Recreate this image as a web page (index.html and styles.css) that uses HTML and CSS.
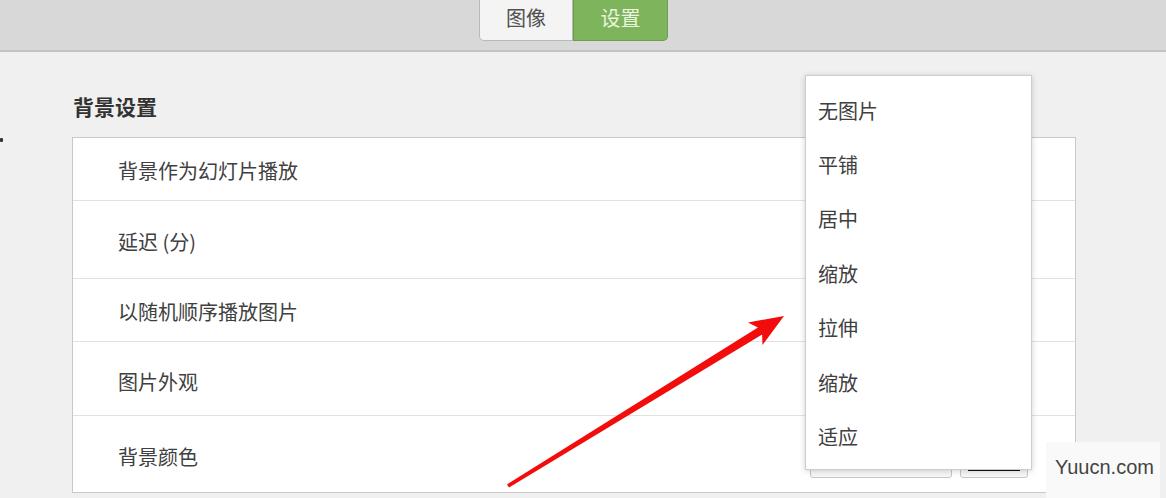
FILE: index.html
```html
<!DOCTYPE html>
<html lang="zh">
<head>
<meta charset="utf-8">
<link rel="stylesheet" href="styles.css">
</head>
<body>
<header class="topbar">
  <div class="tabs">
    <span class="tab">图像</span>
    <span class="tab active">设置</span>
  </div>
</header>
<main class="content">
  <h2 class="section-title">背景设置</h2>
  <div class="panel">
    <div class="row r1"><span>背景作为幻灯片播放</span></div>
    <div class="row r2"><span>延迟 (分)</span></div>
    <div class="row r3"><span>以随机顺序播放图片</span></div>
    <div class="row r4"><span>图片外观</span></div>
    <div class="row r5"><span>背景颜色</span>
      <div class="controls">
        <div class="select-box"></div>
        <div class="color-btn"><i></i></div>
      </div>
    </div>
  </div>
</main>
<div class="cursor-dot"></div>
<ul class="dropdown">
  <li>无图片</li>
  <li>平铺</li>
  <li>居中</li>
  <li>缩放</li>
  <li>拉伸</li>
  <li>缩放</li>
  <li>适应</li>
</ul>
<svg class="arrow" width="1166" height="498" viewBox="0 0 1166 498">
  <polygon fill="#f20c0c" points="507,484.5 757.9,327.6 748,322.5 784,316 762.5,345 762.1,334.4 509,487.5"/>
</svg>
<div class="watermark">Yuucn.com</div>
</body>
</html>
```
FILE: styles.css
```css
* { box-sizing: border-box; }
html, body { margin: 0; padding: 0; }
body {
  width: 1166px;
  height: 498px;
  overflow: hidden;
  background: #f0f0f0;
  font-family: "Noto Sans CJK SC", "Liberation Sans", sans-serif;
  color: #444;
  position: relative;
}
.topbar {
  height: 52px;
  background: #d8d8d8;
  border-bottom: 2px solid #c3c3c3;
  padding-left: 479px;
}
.tabs { display: flex; }
.tab {
  width: 94px;
  height: 41px;
  display: flex;
  align-items: center;
  justify-content: center;
  padding-bottom: 6px;
  font-size: 20px;
  color: #505050;
  background: #f4f4f4;
  border: 1px solid #b8b8b8;
  border-top: none;
  border-radius: 0 0 0 5px;
}
.tab.active {
  width: 95px;
  background: #7db45c;
  border-color: #6c9f4d;
  color: #eaf6de;
  border-radius: 0 0 5px 0;
}
.content { padding-left: 72px; }
.section-title {
  margin: 0;
  padding-top: 41px;
  height: 85px;
  font-size: 21px;
  font-weight: bold;
  color: #333;
  line-height: 26px;
  padding-left: 1px;
}
.panel {
  width: 1004px;
  background: #fff;
  border: 1px solid #c8c8c8;
}
.row {
  display: flex;
  align-items: center;
  justify-content: space-between;
  padding-left: 45px;
  font-size: 20px;
  color: #404040;
  border-bottom: 1px solid #e2e2e2;
}
.row:last-child { border-bottom: none; }
.r1 { height: 63px; padding-top: 3px; }
.r2 { height: 78px; padding-top: 4px; }
.r3 { height: 63px; padding-top: 3px; }
.r4 { height: 74px; padding-top: 5px; }
.r5 { height: 76px; padding-top: 4px; }
.controls {
  display: flex;
  gap: 8px;
  margin-right: 47px;
  margin-top: 4px;
}
.select-box {
  width: 142px;
  height: 40px;
  border: 1px solid #c6c6c6;
  border-radius: 3px;
  background: #f7f7f7;
}
.color-btn {
  width: 68px;
  height: 40px;
  border: 1px solid #c6c6c6;
  border-radius: 3px;
  background: #f7f7f7;
  display: flex;
  align-items: flex-end;
  justify-content: center;
  padding-bottom: 6px;
}
.color-btn i {
  display: block;
  width: 52px;
  height: 2px;
  background: #111;
}
.dropdown {
  position: absolute;
  left: 805px;
  top: 75px;
  width: 227px;
  height: 395px;
  margin: 0;
  padding: 7px 0 0 0;
  list-style: none;
  background: #fff;
  border: 1px solid #cdcdcd;
  box-shadow: 0 1px 6px rgba(0,0,0,0.18);
}
.dropdown li {
  height: 54.4px;
  display: flex;
  align-items: center;
  padding-left: 12px;
  font-size: 20px;
  color: #404040;
}
.arrow {
  position: absolute;
  left: 0;
  top: 0;
  pointer-events: none;
}
.cursor-dot {
  position: absolute;
  left: 0;
  top: 138px;
  width: 3px;
  height: 4px;
  background: #333;
  border-radius: 1px;
}
.watermark {
  position: absolute;
  left: 1046px;
  top: 442px;
  width: 114px;
  height: 56px;
  background: #f9f9f9;
  font-family: "Liberation Sans", Arial, sans-serif;
  font-size: 20px;
  color: #444;
  padding: 14px 0 0 9px;
}
```
